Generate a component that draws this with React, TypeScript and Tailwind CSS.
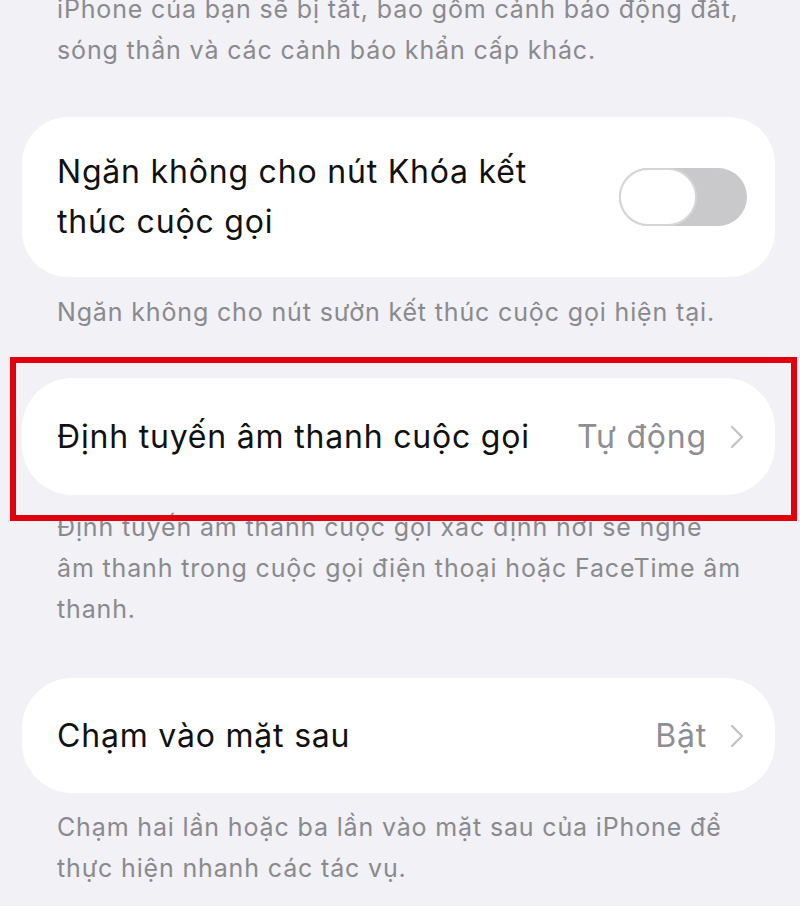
const font = { fontFamily: 'Inter, Roboto, "Noto Sans", sans-serif' };

function Chevron() {
  return (
    <svg width="16" height="26" viewBox="0 0 16 26" fill="none" className="shrink-0">
      <path d="M3 3l10 10-10 10" stroke="#c4c4c8" strokeWidth="2.4" strokeLinecap="round" strokeLinejoin="round" />
    </svg>
  );
}

function Toggle() {
  return (
    <div className="flex h-[58px] w-[128px] shrink-0 rounded-full bg-[#c9c9cb]">
      <div className="h-[58px] w-[78px] rounded-full border-2 border-[#d6d6d8] bg-white" />
    </div>
  );
}

function Footer({ children, className = '' }: { children: React.ReactNode; className?: string }) {
  return (
    <p className={`whitespace-nowrap px-[35px] text-[25px] leading-[41px] tracking-[0.85px] text-[#8a8a8e] ${className}`}>
      {children}
    </p>
  );
}

const title = 'text-[32px] tracking-[0.8px] text-[#111]';
const value = 'mr-[22px] text-[32px] tracking-[0.8px] text-[#8e8e93]';

export default function App() {
  return (
    <div className="h-[906px] w-[800px] overflow-hidden bg-[#f1f1f6]" style={font}>
      <div className="relative flex flex-col pl-[22px] pr-[25px]">
        <Footer className="-mt-[11px]">
          iPhone của bạn sẽ bị tắt, bao gồm cảnh báo động đất,
          <br />
          sóng thần và các cảnh báo khẩn cấp khác.
        </Footer>

        <div className="mt-[46px] flex h-[160px] items-center justify-between rounded-[46px] bg-white pl-[35px] pr-[28px]">
          <div className={`${title} leading-[50px]`}>
            Ngăn không cho nút Khóa kết
            <br />
            thúc cuộc gọi
          </div>
          <Toggle />
        </div>
        <Footer className="mt-[15px]">Ngăn không cho nút sườn kết thúc cuộc gọi hiện tại.</Footer>

        <div className="mt-[45px] flex h-[117px] items-center rounded-[50px] bg-white pl-[35px] pr-[30px]">
          <span className={`flex-1 ${title}`}>Định tuyến âm thanh cuộc gọi</span>
          <span className={value}>Tự động</span>
          <Chevron />
        </div>
        <Footer className="mt-[12px]">
          Định tuyến âm thanh cuộc gọi xác định nơi sẽ nghe
          <br />
          âm thanh trong cuộc gọi điện thoại hoặc FaceTime âm
          <br />
          thanh.
        </Footer>

        <div className="mt-[48px] flex h-[115px] items-center rounded-[50px] bg-white pl-[35px] pr-[30px]">
          <span className={`flex-1 ${title}`}>Chạm vào mặt sau</span>
          <span className={value}>Bật</span>
          <Chevron />
        </div>
        <Footer className="mt-[14px]">
          Chạm hai lần hoặc ba lần vào mặt sau của iPhone để
          <br />
          thực hiện nhanh các tác vụ.
        </Footer>

        <div className="pointer-events-none absolute left-[10px] top-[357px] h-[164px] w-[787px] border-[6px] border-[#e3000d]" />
      </div>
    </div>
  );
}
